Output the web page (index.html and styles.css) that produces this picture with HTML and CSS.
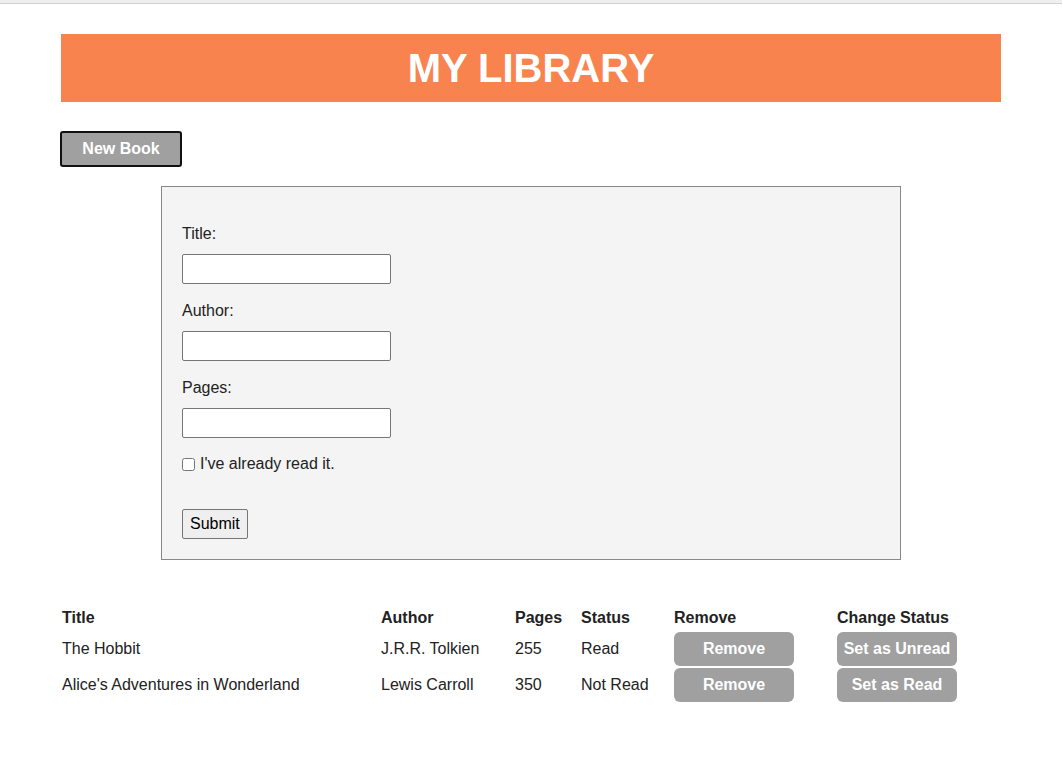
FILE: index.html
```html
<!DOCTYPE html>
<html>
<head>
<meta charset="utf-8">
<link rel="stylesheet" href="styles.css">
<title>My Library</title>
</head>
<body>
<div class="chrome"></div>
<div class="container">
  <header class="banner"><h1>MY LIBRARY</h1></header>
  <button class="new-book">New Book</button>
  <form class="book-form">
    <label class="field-label" for="title">Title:</label>
    <input class="text-input" id="title" type="text">
    <label class="field-label" for="author">Author:</label>
    <input class="text-input" id="author" type="text">
    <label class="field-label" for="pages">Pages:</label>
    <input class="text-input last-input" id="pages" type="text">
    <label class="check-row"><input type="checkbox" class="check"> I've already read it.</label>
    <button type="button" class="submit">Submit</button>
  </form>
  <table class="books">
    <thead>
      <tr>
        <th class="c-title">Title</th>
        <th class="c-author">Author</th>
        <th class="c-pages">Pages</th>
        <th class="c-status">Status</th>
        <th class="c-remove">Remove</th>
        <th class="c-change">Change Status</th>
      </tr>
    </thead>
    <tbody>
      <tr>
        <td>The Hobbit</td>
        <td>J.R.R. Tolkien</td>
        <td>255</td>
        <td>Read</td>
        <td><button class="action">Remove</button></td>
        <td><button class="action">Set as Unread</button></td>
      </tr>
      <tr>
        <td>Alice's Adventures in Wonderland</td>
        <td>Lewis Carroll</td>
        <td>350</td>
        <td>Not Read</td>
        <td><button class="action">Remove</button></td>
        <td><button class="action">Set as Read</button></td>
      </tr>
    </tbody>
  </table>
</div>
</body>
</html>
```
FILE: styles.css
```css
* { box-sizing: border-box; }
html, body { margin: 0; padding: 0; background: #fff; }
body {
  font-family: "Liberation Sans", Arial, sans-serif;
  font-size: 16px;
  color: #222;
  padding-right: 1px;
}
.chrome {
  height: 4px;
  background: #efefef;
  border-bottom: 1px solid #d2d2d2;
}
.container {
  width: 940px;
  margin: 30px auto 0;
  display: flex;
  flex-direction: column;
  align-items: flex-start;
}
.banner {
  width: 100%;
  height: 68px;
  background: #f8834f;
  display: flex;
  align-items: center;
  justify-content: center;
}
.banner h1 {
  margin: 0;
  color: #fff;
  font-size: 40px;
  font-weight: bold;
  line-height: 1;
}
.new-book {
  margin: 29px 0 0 -1px;
  width: 122px;
  height: 36px;
  background: #a0a0a0;
  border: 2px solid #111;
  border-radius: 3px;
  color: #fff;
  font-family: "Liberation Sans", Arial, sans-serif;
  font-size: 16px;
  font-weight: bold;
  padding: 0;
}
.book-form {
  align-self: center;
  width: 740px;
  margin-top: 19px;
  background: #f4f4f4;
  border: 1px solid #888;
  padding: 38px 20px 20px;
  display: flex;
  flex-direction: column;
  align-items: flex-start;
}
.field-label {
  line-height: 18px;
  margin-bottom: 11px;
}
.text-input {
  width: 209px;
  height: 30px;
  border: 1px solid #767676;
  border-radius: 2px;
  background: #fff;
  margin: 0 0 18px;
  font-size: 16px;
}
.text-input.last-input { margin-bottom: 17px; }
.check-row {
  display: flex;
  align-items: center;
  line-height: 18px;
  gap: 5px;
}
.check {
  margin: 1px 0 0;
  width: 13px;
  height: 13px;
}
.submit {
  margin-top: 36px;
  height: 30px;
  padding: 0 7px;
  font-family: "Liberation Sans", Arial, sans-serif;
  font-size: 16px;
  color: #000;
  background: #efefef;
  border: 1px solid #767676;
  border-radius: 2px;
}
.books {
  margin-top: 46px;
  width: 940px;
  border-collapse: separate;
  border-spacing: 0 2px;
  table-layout: fixed;
}
.books th, .books td {
  padding: 0 1px;
  text-align: left;
  line-height: 18px;
  vertical-align: middle;
}
.books th {
  font-weight: bold;
  padding-top: 1px;
  padding-bottom: 3px;
}
.c-title { width: 319px; }
.c-author { width: 134px; }
.c-pages { width: 66px; }
.c-status { width: 93px; }
.c-remove { width: 163px; }
.c-change { width: 165px; }
.action {
  display: block;
  width: 120px;
  height: 34px;
  background: #a0a0a0;
  border: none;
  border-radius: 6px;
  color: #fff;
  font-family: "Liberation Sans", Arial, sans-serif;
  font-size: 16px;
  font-weight: bold;
  padding: 0;
}
```
